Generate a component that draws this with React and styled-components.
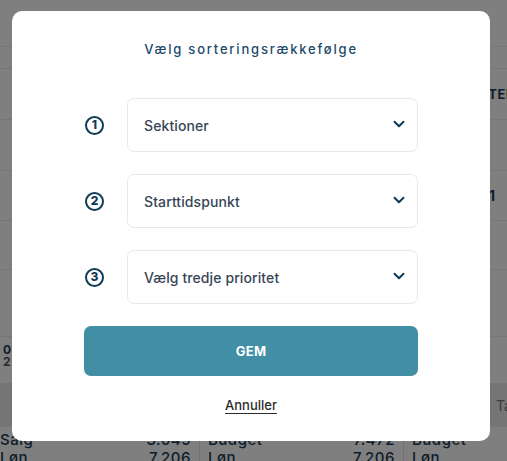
import React from "react";
import styled, { createGlobalStyle } from "styled-components";

const GlobalStyle = createGlobalStyle`
  html, body { margin: 0; padding: 0; }
  body {
    font-family: Inter, "Noto Sans", "Liberation Sans", sans-serif;
    background: #ffffff;
    color: #1d3b57;
  }
  * { box-sizing: border-box; }
`;

/* ---------- background page (under the overlay) ---------- */
const Page = styled.div`
  width: 507px;
  height: 461px;
  overflow: hidden;
  background: #ffffff;
  display: flex;
  flex-direction: column;
`;

const BgRow = styled.div`
  flex: none;
  height: ${(p) => p.$h}px;
  border-bottom: ${(p) => (p.$line ? "1px solid #ececec" : "none")};
  background: ${(p) => (p.$band ? "#ebebeb" : "transparent")};
  display: flex;
  align-items: center;
  padding-left: ${(p) => p.$pad || 0}px;
  white-space: nowrap;
`;

const BgText = styled.span`
  font-size: ${(p) => p.$size || 13}px;
  font-weight: ${(p) => p.$weight || 700};
  color: ${(p) => p.$color || "#1d3b57"};
  line-height: ${(p) => p.$lh || "normal"};
  letter-spacing: ${(p) => p.$ls || 0}px;
`;

const Stack = styled.div`
  display: flex;
  flex-direction: column;
  gap: 2px;
  margin-top: -9px;
`;

const SumGrid = styled.div`
  display: grid;
  grid-template-columns: 199px 204px 1fr;
  flex: 1;
`;

const SumCol = styled.div`
  display: flex;
  flex-direction: column;
  border-left: ${(p) => (p.$first ? "none" : "1px solid #e2e2e2")};
  padding: 4px 8px 0 ${(p) => (p.$first ? 0 : 8)}px;
`;

const SumLine = styled.div`
  display: flex;
  justify-content: space-between;
  font-size: 15px;
  line-height: 18px;
  color: #1d3b57;
  font-weight: 500;
  letter-spacing: 0.5px;
`;

/* ---------- overlay & modal ---------- */
const Overlay = styled.div`
  position: fixed;
  inset: 0;
  background: rgba(0, 0, 0, 0.5);
  display: flex;
  align-items: flex-start;
  justify-content: flex-start;
  padding: 11px 0 0 12px;
`;

const Modal = styled.div`
  width: 478px;
  height: 430px;
  background: #ffffff;
  border-radius: 10px;
  padding: 27px 72px 0;
  display: flex;
  flex-direction: column;
  align-items: stretch;
`;

const Title = styled.h2`
  margin: 0 0 38px;
  text-align: center;
  font-size: 13px;
  font-weight: 500;
  letter-spacing: 1.8px;
  color: #1b4a6a;
  line-height: 22px;
`;

const Rows = styled.div`
  display: flex;
  flex-direction: column;
  gap: 22px;
`;

const PriorityRow = styled.div`
  display: flex;
  align-items: center;
  gap: 23px;
`;

const NumberBadge = styled.span`
  flex: none;
  width: 19px;
  height: 19px;
  margin-left: 1px;
  border-radius: 50%;
  border: 2px solid #0f3b57;
  color: #0f3b57;
  font-size: 12px;
  font-weight: 800;
  display: flex;
  align-items: center;
  justify-content: center;
  line-height: 1;
`;

const Select = styled.div`
  flex: 1;
  height: 54px;
  border: 1px solid #e9e9ec;
  border-radius: 7px;
  display: flex;
  align-items: center;
  justify-content: space-between;
  padding: 0 9px 0 16px;
  cursor: pointer;
`;

const SelectLabel = styled.span`
  font-size: 14px;
  font-weight: 500;
  color: #374656;
  letter-spacing: 0.1px;
`;

const Chevron = () => (
  <svg width="18" height="18" viewBox="0 0 24 24" fill="none" stroke="#0f3b57"
    strokeWidth="2.7" strokeLinecap="round" strokeLinejoin="round" style={{ marginTop: -2 }}>
    <path d="m6 9 6 6 6-6" />
  </svg>
);

const SaveButton = styled.button`
  margin-top: 22px;
  height: 50px;
  border: none;
  border-radius: 7px;
  background: #418ea5;
  color: #ffffff;
  font-family: inherit;
  font-size: 13px;
  font-weight: 700;
  letter-spacing: 0.3px;
  cursor: pointer;
`;

const CancelLink = styled.button`
  align-self: center;
  margin-top: 21px;
  border: none;
  background: none;
  padding: 0;
  font-family: inherit;
  font-size: 13px;
  font-weight: 500;
  color: #2b2b2b;
  text-decoration: underline;
  text-underline-offset: 3px;
  cursor: pointer;
`;

const priorities = ["Sektioner", "Starttidspunkt", "Vælg tredje prioritet"];

export default function App() {
  return (
    <>
      <GlobalStyle />
      <Page>
        <BgRow $h={47} $line />
        <BgRow $h={22} $line />
        <BgRow $h={51} $line $pad={452}>
          <BgText $size={13} $ls={0.5}>STARTER</BgText>
        </BgRow>
        <BgRow $h={51} $line />
        <BgRow $h={50} $line $pad={489}>
          <BgText $size={14}>1</BgText>
        </BgRow>
        <BgRow $h={49} $line />
        <BgRow $h={67} $line />
        <BgRow $h={46} $pad={3}>
          <Stack>
            <BgText $size={12} $lh="10px">0</BgText>
            <BgText $size={12} $lh="10px" $color="#555">2</BgText>
          </Stack>
        </BgRow>
        <BgRow $h={44} $band $pad={496}>
          <BgText $size={14} $weight={400} $color="#777">Ta</BgText>
        </BgRow>
        <SumGrid>
          <SumCol $first>
            <SumLine><span>Salg</span><span>3.045</span></SumLine>
            <SumLine><span>Løn</span><span>7.206</span></SumLine>
          </SumCol>
          <SumCol>
            <SumLine><span>Budget</span><span>7.472</span></SumLine>
            <SumLine><span>Løn</span><span>7.206</span></SumLine>
          </SumCol>
          <SumCol>
            <SumLine><span>Budget</span><span></span></SumLine>
            <SumLine><span>Løn</span><span></span></SumLine>
          </SumCol>
        </SumGrid>
      </Page>

      <Overlay>
        <Modal>
          <Title>Vælg sorteringsrækkefølge</Title>
          <Rows>
            {priorities.map((label, i) => (
              <PriorityRow key={label}>
                <NumberBadge>{i + 1}</NumberBadge>
                <Select>
                  <SelectLabel>{label}</SelectLabel>
                  <Chevron />
                </Select>
              </PriorityRow>
            ))}
          </Rows>
          <SaveButton>GEM</SaveButton>
          <CancelLink>Annuller</CancelLink>
        </Modal>
      </Overlay>
    </>
  );
}
